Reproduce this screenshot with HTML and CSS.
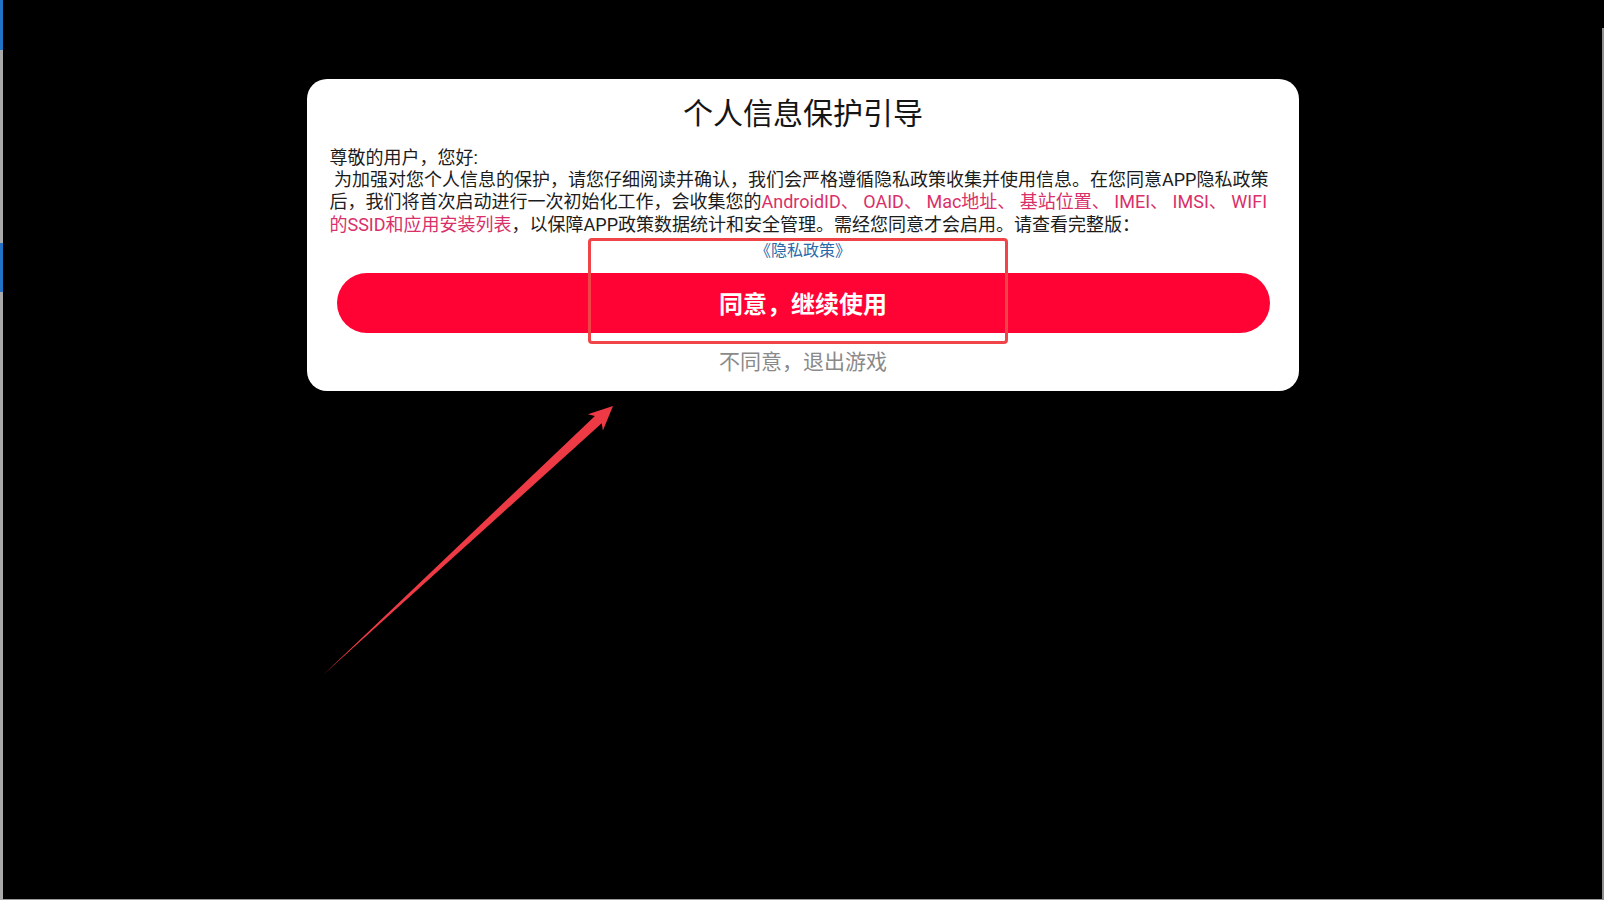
FILE: index.html
```html
<!DOCTYPE html>
<html lang="zh-CN">
<head>
<meta charset="utf-8">
<title>个人信息保护引导</title>
<link rel="stylesheet" href="styles.css">
</head>
<body>
<div class="screen">
  <div class="edge-left">
    <span class="seg blue s1"></span>
    <span class="seg gray s2"></span>
    <span class="seg blue s3"></span>
    <span class="seg gray s4"></span>
  </div>
  <div class="stage">
    <div class="dialog">
      <h1 class="title">个人信息保护引导</h1>
      <p class="body">尊敬的用户，您好:<br>&nbsp;为加强对您个人信息的保护，请您仔细阅读并确认，我们会严格遵循隐私政策收集并使用信息。在您同意APP隐私政策后，我们将首次启动进行一次初始化工作，会收集您的<span class="hl">AndroidID<span class="dun">、</span>OAID<span class="dun">、</span>Mac地址<span class="dun">、</span>基站位置<span class="dun">、</span>IMEI<span class="dun">、</span>IMSI<span class="dun">、</span>WIFI的SSID和应用安装列表</span>，以保障APP政策数据统计和安全管理。需经您同意才会启用。请查看完整版：</p>
      <a class="link" href="#">《隐私政策》</a>
      <button class="agree" type="button">同意，继续使用</button>
      <div class="decline">不同意，退出游戏</div>
    </div>
  </div>
  <div class="edge-right">
    <span class="top"></span>
    <span class="line"></span>
  </div>

  <div class="mark-box"></div>
  <svg class="mark-arrow" width="1604" height="900" viewBox="0 0 1604 900" aria-hidden="true">
    <polygon points="323,675 594.9,415.9 587.9,414.2 613,406 602.9,430.4 601.7,423.3" fill="#ee3a44"/>
  </svg>
</div>
</body>
</html>
```

FILE: styles.css
```css
* { box-sizing: border-box; }

html, body {
  margin: 0;
  padding: 0;
  background: #000;
}

body {
  font-family: "Roboto", "Noto Sans CJK SC", sans-serif;
}

.screen {
  position: relative;
  display: flex;
  width: 1604px;
  height: 900px;
  background: #000;
  overflow: hidden;
}

.edge-left {
  width: 3px;
  display: flex;
  flex-direction: column;
}
.edge-left .seg { display: block; }
.edge-left .blue { background: #1f72c4; }
.edge-left .gray { background: #a9a9a9; }
.edge-left .s1 { height: 50px; }
.edge-left .s2 { height: 193px; }
.edge-left .s3 { height: 49px; }
.edge-left .s4 { flex: 1; }

.edge-right {
  width: 2px;
  display: flex;
  flex-direction: column;
}
.edge-right .top { height: 28px; background: #000; }
.edge-right .line { flex: 1; background: #8e8e8e; }

.stage {
  flex: 1;
  display: flex;
  justify-content: center;
  align-items: flex-start;
  padding-top: 79px;
  border-bottom: 1px solid #9a9a9a;
}

.dialog {
  width: 992px;
  background: #fff;
  border-radius: 20px;
  padding: 14px 22px 15px 23px;
  display: flex;
  flex-direction: column;
  align-items: stretch;
}

.title {
  margin: 0;
  font-size: 30px;
  font-weight: 400;
  line-height: 42px;
  color: #151515;
  text-align: center;
}

.body {
  margin: 12px 0 0;
  font-size: 18px;
  line-height: 22.2px;
  color: #1c1c1c;
}

.hl { color: #d9306a; }
.dun { margin-right: 4.5px; }

.link {
  align-self: center;
  margin-top: 4px;
  font-size: 16px;
  line-height: 22px;
  color: #2b6aa8;
  text-decoration: none;
}

.agree {
  margin: 11px 7px 0;
  height: 60px;
  border: 0;
  border-radius: 30px;
  background: #ff0335;
  color: #fff;
  font-family: "Roboto", "Noto Sans CJK SC", sans-serif;
  font-size: 24px;
  font-weight: 700;
  cursor: pointer;
}

.decline {
  margin-top: 15px;
  font-size: 21px;
  line-height: 28px;
  color: #8a8a8a;
  text-align: center;
}

.mark-box {
  position: absolute;
  left: 588px;
  top: 238px;
  width: 420px;
  height: 106px;
  border: 3px solid #ef4548;
  border-radius: 4px;
  pointer-events: none;
}

.mark-arrow {
  position: absolute;
  left: 0;
  top: 0;
  pointer-events: none;
}
```
